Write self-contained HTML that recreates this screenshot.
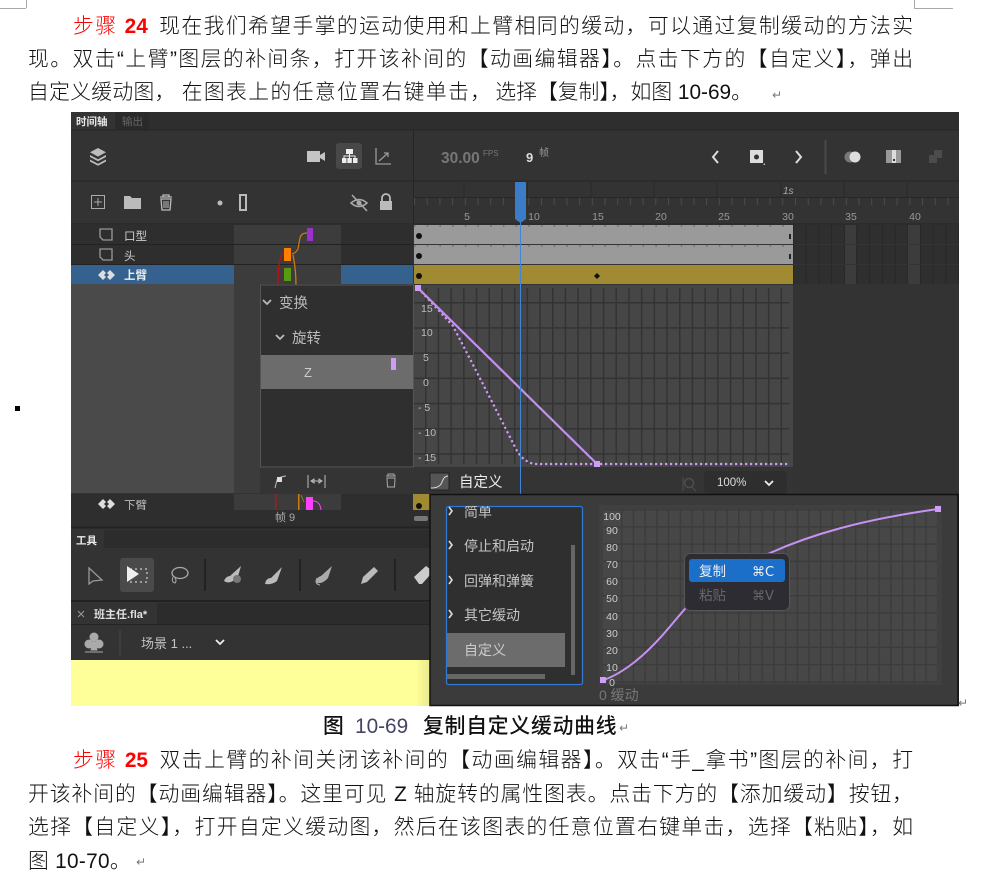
<!DOCTYPE html>
<html><head><meta charset="utf-8"><style>
html,body{margin:0;padding:0;background:#fff;width:983px;height:880px;overflow:hidden}
.l{position:absolute;font:300 20.8px/30px "Liberation Sans","Noto Sans CJK SC",sans-serif;color:#111;white-space:nowrap;text-align:justify;text-align-last:justify}
.n{text-align:left;text-align-last:left;letter-spacing:.3px}
.r{color:#f00;margin-right:10px}
.r b{font-weight:700}
.m{position:absolute;background:#aaa}
.p{position:absolute;font:12px "Liberation Sans","DejaVu Sans",sans-serif;color:#777}
svg{position:absolute;left:0;top:0}
svg text{font-family:"Liberation Sans","Noto Sans CJK SC",sans-serif}
</style></head><body>
<div class="m" style="left:0;top:8px;width:26px;height:1px"></div><div class="m" style="left:26px;top:0;width:1px;height:8px"></div>
<div class="m" style="left:914px;top:8px;width:39px;height:1px"></div><div class="m" style="left:914px;top:0;width:1px;height:8px"></div>
<div class="l" style="left:73px;top:12px;width:840px"><span class="r">步骤 <b>24</b></span>现在我们希望手掌的运动使用和上臂相同的缓动，可以通过复制缓动的方法实</div>
<div class="l" style="left:28px;top:45px;width:885px">现。双击“上臂”图层的补间条，打开该补间的【动画编辑器】。点击下方的【自定义】，弹出</div>
<div class="l n" style="left:28px;top:78px">自定义缓动图<span style="margin-right:6px">，</span><span style="letter-spacing:1.400px">在图表上的任意位置右键单击</span><span style="margin-right:4px">，</span><span style="letter-spacing:0">选择【复制】，如图 10-69。</span></div>
<div class="p" style="left:772px;top:88px">↵</div>
<div style="position:absolute;left:15px;top:406px;width:5px;height:5px;background:#000"></div>

<svg width="983" height="880" viewBox="0 0 983 880">
<defs>
<pattern id="g1" x="425" y="302" width="12.7" height="25.200" patternUnits="userSpaceOnUse"><rect width="12.7" height="25.200" fill="#464646"/><path d="M.75 0V25.200M0 .75H12.7" stroke="#333" stroke-width="1.500"/></pattern>
<pattern id="g1h" x="414" y="302" width="12.7" height="25.200" patternUnits="userSpaceOnUse"><rect width="12.7" height="25.200" fill="#464646"/><path d="M0 .75H12.7" stroke="#333" stroke-width="1.500"/></pattern>
<pattern id="g2" x="621" y="509" width="11.700" height="17.200" patternUnits="userSpaceOnUse"><rect width="11.700" height="17.200" fill="#474747"/><path d="M.75 0V17.200M0 .75H11.700" stroke="#3c3c3c" stroke-width="1.500"/></pattern>
<pattern id="g2h" x="603" y="509" width="11.700" height="17.200" patternUnits="userSpaceOnUse"><rect width="11.700" height="17.200" fill="#474747"/><path d="M0 .75H11.700" stroke="#3c3c3c" stroke-width="1.500"/></pattern>
<pattern id="c" x="793" y="225" width="12.7" height="20" patternUnits="userSpaceOnUse"><rect width="12.7" height="20" fill="#2f2f2f"/><path d="M.5 0V20" stroke="#272727"/></pattern>
<pattern id="t" x="414" y="198" width="12.7" height="7" patternUnits="userSpaceOnUse"><path d="M.5 0V7" stroke="#4c4c4c"/></pattern>
<linearGradient id="y" x1="0" x2="1" y1="0" y2="0"><stop offset="0" stop-color="#ffff99"/><stop offset=".96" stop-color="#ffff99"/><stop offset="1" stop-color="#e8e890"/></linearGradient>
<clipPath id="list"><rect x="447" y="506" width="134" height="178"/></clipPath>
<clipPath id="low"><rect x="71" y="494" width="359" height="212"/></clipPath>
</defs>
<!-- base -->
<rect x="71" y="112" width="888" height="594" fill="#333"/>
<rect x="71" y="112" width="888" height="18" fill="#2e2e2e"/>
<rect x="71" y="112" width="44" height="18" fill="#333"/>
<rect x="115" y="112" width="34" height="18" fill="#2a2a2a"/>
<text x="76" y="125" font-size="10.5" font-weight="700" fill="#e8e8e8">时间轴</text>
<text x="122" y="125" font-size="10.5" fill="#666">输出</text>
<path d="M71 130H959M71 181H959M71 224H959M413.500 130V224" stroke="#252525" fill="none"/>
<!-- header icons -->
<path d="M98 148l8 4.300-8 4.300-8-4.300zM90 155l8 4.300 8-4.300v2l-8 4.300-8-4.300zM90 159.500l8 4.300 8-4.300v2l-8 4.300-8-4.300z" fill="#bbb"/>
<path d="M307 151h13v11h-13zM320 155l5-3v9l-5-3z" fill="#c4c4c4"/>
<rect x="336" y="143" width="26" height="26" rx="3" fill="#484848"/>
<path d="M346 149h7v5h-7zM342 158h4.500v5h-4.500zM347.300 158h4.500v5h-4.500zM353 158h4.500v5h-4.500z" fill="#eee"/>
<path d="M349.500 154V158M344 158V156H355V158" stroke="#eee" fill="none"/>
<path d="M376 148v16h15M379 161l9-8M384 153h4v4" stroke="#999" stroke-width="1.300" fill="none"/>
<text x="441" y="163" font-size="15.5" font-weight="700" fill="#777">30.00</text>
<text x="483" y="156" font-size="8" fill="#777">FPS</text>
<text x="526" y="162" font-size="13" font-weight="700" fill="#ddd">9</text>
<text x="539" y="156" font-size="10" fill="#999">帧</text>
<path d="M718 151l-5 6 5 6M796 151l5 6-5 6" stroke="#ddd" stroke-width="2" fill="none"/>
<rect x="750" y="150" width="13" height="13" fill="#ddd"/><circle cx="756.500" cy="157" r="2.500" fill="#333"/>
<path d="M765 165h-2l2-2z" fill="#ccc"/>
<rect x="824.500" y="140" width="2" height="34" fill="#4a4a4a"/>
<circle cx="850" cy="157" r="5.500" fill="#777"/><circle cx="855" cy="157" r="5.500" fill="#ddd"/>
<rect x="886" y="150" width="15" height="13" fill="#999"/><rect x="892" y="150" width="4" height="13" fill="#ddd"/><rect x="893" y="159" width="2" height="2" fill="#333"/>
<path d="M929 155h8v8h-8zM934 150h8v8h-8z" fill="#4c4c4c"/>
<!-- second row -->
<rect x="91.500" y="195.500" width="13" height="13" fill="none" stroke="#aaa"/><path d="M98 198v8M94 202h8" stroke="#aaa"/>
<path d="M124 196h6l2 2h9v11h-17z" fill="#bbb"/>
<path d="M160 197h12M163 197v-2h6v2M161 199h10l-1 11h-8z" stroke="#bbb" stroke-width="1.300" fill="none"/><path d="M164 201v7M166 201v7M168 201v7" stroke="#bbb"/>
<circle cx="220" cy="203" r="2.500" fill="#bbb"/>
<rect x="240" y="195" width="6" height="15" fill="none" stroke="#bbb" stroke-width="2"/>
<path d="M351 203q8-7 16 0q-8 7-16 0zM352 195l15 16" stroke="#aaa" stroke-width="1.500" fill="none"/><circle cx="359" cy="203" r="2.500" fill="#aaa"/>
<rect x="380" y="201" width="12" height="9" fill="#bbb"/><path d="M382 201v-3a4 4 0 018 0v3" stroke="#bbb" stroke-width="1.800" fill="none"/>
<!-- ruler -->
<path d="M414 197.500H959" stroke="#272727"/>
<rect x="414" y="198" width="545" height="7" fill="url(#t)"/>
<path d="M464 182V197M527.500 182V197M591 182V197M654 182V197M717 182V197M781 182V197M844 182V197M907 182V197" stroke="#282828"/>
<g font-size="10.500" fill="#999" text-anchor="middle"><text x="467" y="220">5</text><text x="534" y="220">10</text><text x="598" y="220">15</text><text x="661" y="220">20</text><text x="724" y="220">25</text><text x="788" y="220">30</text><text x="851" y="220">35</text><text x="915" y="220">40</text></g>
<text x="783" y="194" font-size="10" font-style="italic" fill="#aaa">1s</text>
<!-- layers -->
<rect x="71" y="225" width="342" height="59" fill="#2e2e2e"/>
<rect x="234" y="225" width="107" height="59" fill="#3c3c3c"/>
<path d="M71 244.500H413M71 264.500H413" stroke="#222"/>
<rect x="71" y="265" width="163" height="19" fill="#35618f"/><rect x="341" y="265" width="72" height="19" fill="#35618f"/>
<g fill="none" stroke="#999" stroke-width="1.300"><path d="M100 229h12v11h-9l-3-3zM100 249h12v11h-9l-3-3z"/></g>
<text x="124" y="240" font-size="11.500" fill="#ccc">口型</text><text x="124" y="260" font-size="11.500" fill="#ccc">头</text><text x="124" y="279" font-size="11.500" font-weight="700" fill="#eee">上臂</text>
<path d="M98 275l5-5 3 3-2 2 2 2-3 3zM115 275l-5-5-3 3 2 2-2 2 3 3z" fill="#ddd"/>
<rect x="307" y="228" width="6" height="13" fill="#9932cc"/><rect x="284" y="248" width="7" height="13" fill="#ff8000"/><rect x="284" y="268" width="7" height="13" fill="#5a9a10"/>
<path d="M307 233q-6 0-7 5t-2 11q-2 4-6 5" stroke="#d07a10" stroke-width="1.200" fill="none"/>
<path d="M283 253q-5 5-5 32" stroke="#c01010" stroke-width="1.300" fill="none"/><path d="M293 255q3 15 3 30" stroke="#d07a10" stroke-width="1.300" fill="none"/>
<!-- lower-left gray -->
<rect x="71" y="284" width="163" height="209" fill="#4a4a4a"/>
<rect x="234" y="284" width="26" height="209" fill="#3c3c3c"/>
<!-- frames -->
<rect x="414" y="225" width="379" height="19" fill="#9a9a9a"/><rect x="414" y="245" width="379" height="19" fill="#9a9a9a"/><rect x="414" y="265" width="379" height="19" fill="#a08a32"/>
<path d="M414 226H793M414 246H793" stroke="#555" stroke-dasharray="1.500 11.200"/>
<circle cx="419" cy="236" r="3" fill="#111"/><circle cx="419" cy="256" r="3" fill="#111"/><circle cx="419" cy="276" r="3" fill="#111"/>
<rect x="789" y="234" width="2" height="5" fill="#222"/><rect x="789" y="254" width="2" height="5" fill="#222"/>
<path d="M597 273l3 3-3 3-3-3z" fill="#111"/>
<rect x="793" y="225" width="166" height="59" fill="url(#c)"/>
<rect x="845" y="225" width="11" height="59" fill="#3c3c3c"/><rect x="908" y="225" width="12" height="59" fill="#3c3c3c"/>
<path d="M793 244.500H959M793 264.500H959" stroke="#333"/>
<!-- property panel -->
<rect x="260.500" y="285" width="153" height="182" fill="#2f2f2f" stroke="#555"/>
<rect x="261" y="355" width="152" height="34" fill="#6c6c6c"/>
<path d="M263 300l4 4 4-4M276 335l4 4 4-4" stroke="#bbb" stroke-width="1.800" fill="none"/>
<text x="279" y="308" font-size="14.500" fill="#bbb">变换</text><text x="292" y="343" font-size="14.500" fill="#bbb">旋转</text>
<text x="304" y="377" font-size="13" fill="#ccc">Z</text>
<rect x="391" y="358" width="5" height="12" fill="#cf9cf7"/>
<!-- graph -->
<rect x="414" y="285" width="379" height="182" fill="#464646"/>
<rect x="414" y="288" width="11" height="176" fill="url(#g1h)"/>
<rect x="425" y="288" width="364" height="176" fill="url(#g1)"/>
<g font-size="10.500" fill="#bbb"><text x="421" y="312">15</text><text x="421" y="336">10</text><text x="423" y="361">5</text><text x="423" y="386">0</text><text x="418" y="411">- 5</text><text x="418" y="436">- 10</text><text x="418" y="461">- 15</text></g>
<path d="M418 288L453 326L487 392L515 447Q522 462 535 464H790" stroke="#cf9cf7" stroke-width="2.200" stroke-dasharray="2.200 2.800" fill="none"/>
<path d="M418 288L597 464" stroke="#c48ff0" stroke-width="2.200" fill="none"/>
<rect x="415" y="285" width="6" height="6" fill="#cf9cf7"/><rect x="594" y="461" width="6" height="6" fill="#cf9cf7"/>
<path d="M520.500 222V494" stroke="#3f86d8"/>
<path d="M515 182h11v37l-5.500 4-5.500-4z" fill="#3b7cc6"/>
<!-- bottom tools -->
<rect x="260" y="468" width="533" height="26" fill="#343434"/>
<path d="M520.500 468V494" stroke="#3f86d8"/>
<path d="M275 488l2-8q1-3 9-4" stroke="#bbb" fill="none"/><rect x="277" y="477" width="5" height="5" fill="#ddd"/>
<path d="M308 475V488M325 475V488M311 481h11M311 481l3-2v4zM322 481l-3-2v4z" stroke="#bbb" fill="none"/>
<path d="M386 476h10M388 476v-2h6v2M387 478h8l-.5 9h-7z" stroke="#aaa" fill="none"/>
<rect x="430" y="473" width="19" height="17" fill="#555" stroke="#222"/><path d="M431 488q9 0 11-6t6-6" stroke="#ddd" fill="none"/>
<text x="459" y="487" font-size="14.500" fill="#eee">自定义</text>
<circle cx="689" cy="483" r="4.500" stroke="#4e4e4e" fill="none" stroke-width="1.500"/><path d="M692 487l4 4M683 477v14" stroke="#4e4e4e"/>
<rect x="704" y="471" width="83" height="23" rx="4" fill="#2e2e2e"/>
<text x="717" y="486" font-size="11.500" fill="#ddd">100%</text>
<path d="M765 481l4 4 4-4" stroke="#eee" stroke-width="1.800" fill="none"/>
<!-- lower left -->
<rect x="71" y="494" width="359" height="212" fill="#333" />
<g clip-path="url(#low)">
<rect x="71" y="494" width="342" height="16" fill="#2e2e2e"/><rect x="234" y="494" width="107" height="16" fill="#3c3c3c"/>
<text x="124" y="509" font-size="11.500" fill="#bbb">下臂</text>
<path d="M98 504l5-5 3 3-2 2 2 2-3 3zM115 504l-5-5-3 3 2 2-2 2 3 3z" fill="#ddd"/>
<rect x="275" y="494" width="1.500" height="16" fill="#c01010"/><rect x="298" y="494" width="1.500" height="16" fill="#d07a10"/>
<rect x="306" y="497" width="7" height="13" fill="#ff40ff"/><path d="M313 501q7 0 8 9" stroke="#ff40ff" fill="none"/><path d="M301 495l3 7" stroke="#6a8a10"/>
<rect x="413" y="494" width="17" height="16" fill="#a08a32"/><circle cx="419" cy="506" r="3" fill="#111"/>
<rect x="71" y="510" width="359" height="17" fill="#2e2e2e"/>
<text x="275" y="521" font-size="11" fill="#aaa">帧 9</text>
<rect x="414" y="516" width="14" height="5" rx="2" fill="#777"/>
<path d="M71 527.500H430" stroke="#232323" stroke-width="2"/>
<rect x="71" y="530" width="359" height="18" fill="#2c2c2c"/><rect x="71" y="530" width="33" height="18" fill="#333"/>
<text x="76" y="544" font-size="10.500" font-weight="700" fill="#e8e8e8">工具</text>
<rect x="120" y="558" width="34" height="34" rx="3" fill="#4a4a4a"/>
<path d="M89 568l0 16 4-3 9-1z" fill="none" stroke="#999" stroke-width="1.300"/>
<path d="M127 566l0 16 12-8z" fill="#eee"/><rect x="130" y="569" width="17" height="13" fill="none" stroke="#eee" stroke-dasharray="2 3"/>
<ellipse cx="180" cy="573" rx="8" ry="5.500" fill="none" stroke="#aaa" stroke-width="1.300"/><path d="M173 577q-2 5 2 6 2-2 0-5" fill="none" stroke="#aaa"/>
<path d="M205 559v32M300 559v32M395 559v32" stroke="#222" stroke-width="2"/>
<path d="M224 581q2-5 6-5l11-10-4 14-4 1q-5 3-9 0z" fill="#bbb"/><circle cx="237" cy="579" r="4" fill="#777"/>
<path d="M265 584q1-6 6-6l11-11-5 14q-5 4-12 3z" fill="#bbb"/>
<path d="M317 583q-2-5 4-7l11-10-4 12q-5 6-11 5z" fill="#aaa"/><path d="M317 578q-3 6 3 7" stroke="#aaa" fill="none"/>
<path d="M361 584l2-7 11-10 4 4-11 11z" fill="#bbb"/>
<path d="M414 577l12-11 4 3v6l-8 9h-3z" fill="#ccc"/>
<path d="M71 601H430" stroke="#222" stroke-width="2"/>
<rect x="71" y="603" width="359" height="21" fill="#2c2c2c"/><rect x="71" y="603" width="86" height="21" fill="#333"/>
<path d="M78 611l6 6M84 611l-6 6" stroke="#999"/>
<text x="94" y="618" font-size="11" font-weight="700" fill="#e0e0e0">班主任.fla*</text>
<path d="M71 624.500H430" stroke="#232323"/>
<circle cx="94" cy="637" r="4.500" fill="#aaa"/><circle cx="89" cy="644" r="4.500" fill="#aaa"/><circle cx="99" cy="644" r="4.500" fill="#aaa"/><path d="M94 640l3 10h-6zM85 652h18" stroke="#aaa" fill="#aaa"/>
<path d="M120 630V655" stroke="#3e3e3e" stroke-width="2"/>
<text x="141" y="648" font-size="13" fill="#c4c4c4">场景 1 ...</text>
<path d="M216 640l4 4 4-4" stroke="#eee" stroke-width="1.800" fill="none"/>
<rect x="71" y="660" width="359" height="46" fill="url(#y)"/>
</g>
<!-- popup -->
<rect x="430" y="494.500" width="528" height="211" fill="#3b3b3b" stroke="#111" stroke-width="1.500"/>
<rect x="446.500" y="506.500" width="136" height="178" rx="2" fill="#2f2f2f" stroke="#2f79d3" stroke-width="1.300"/>
<g clip-path="url(#list)">
<rect x="447" y="633" width="118" height="34" fill="#6c6c6c"/>
<g font-size="14" fill="#c4c4c4"><text x="464" y="517">简单</text><text x="464" y="551">停止和启动</text><text x="464" y="586">回弹和弹簧</text><text x="464" y="620">其它缓动</text><text x="464" y="655" fill="#ccc">自定义</text></g>
<path d="M449 507l3 4-3 4M449 541l3 4-3 4M449 576l3 4-3 4M449 610l3 4-3 4" stroke="#ddd" stroke-width="1.600" fill="none"/>
<rect x="571" y="545" width="4" height="130" fill="#666"/><rect x="447" y="674" width="98" height="5" fill="#666"/>
</g>
<rect x="599" y="505" width="343" height="180" fill="#404040"/>
<rect x="603" y="509" width="18" height="174" fill="url(#g2h)"/>
<rect x="621" y="509" width="316" height="174" fill="url(#g2)"/>
<g font-size="10.500" fill="#ccc" text-anchor="middle"><text x="612" y="520">100</text><text x="612" y="534">90</text><text x="612" y="551">80</text><text x="612" y="568">70</text><text x="612" y="585">60</text><text x="612" y="602">50</text><text x="612" y="620">40</text><text x="612" y="637">30</text><text x="612" y="654">20</text><text x="612" y="671">10</text><text x="612" y="686">0</text></g>
<path d="M604 680C628 671 650 650 667 630S700 590 720 575 750 562 770 553C810 535 860 520 938 509" stroke="#c792f2" stroke-width="2" fill="none"/>
<rect x="600" y="677" width="6" height="6" fill="#cf9cf7"/><rect x="935" y="506" width="6" height="6" fill="#cf9cf7"/>
<rect x="684.500" y="553.500" width="105" height="57" rx="6" fill="#2d2c33" stroke="#555"/>
<rect x="689" y="559" width="96" height="23" rx="3" fill="#1b6fc9"/>
<text x="699" y="576" font-size="13.500" fill="#eee">复制</text><text x="752" y="576" font-size="13" fill="#eee" style="font-family:'DejaVu Sans',sans-serif">⌘C</text>
<text x="699" y="600" font-size="13.500" fill="#666">粘贴</text><text x="752" y="600" font-size="13" fill="#666" style="font-family:'DejaVu Sans',sans-serif">⌘V</text>
<text x="599" y="700" font-size="14" fill="#777">0 缓动</text>
</svg>

<div class="p" style="left:958px;top:696px">↵</div>
<div class="l" style="left:323px;top:712px;width:20px;font-weight:500">图</div>
<div class="l n" style="left:355px;top:712px;color:#446;letter-spacing:0">10-69</div>
<div class="l n" style="left:423px;top:712px;letter-spacing:.8px;font-weight:500">复制自定义缓动曲线</div>
<div class="p" style="left:619px;top:721px">↵</div>
<div class="l" style="left:73px;top:746px;width:840px"><span class="r">步骤 <b>25</b></span>双击上臂的补间关闭该补间的【动画编辑器】。双击“手_拿书”图层的补间，打</div>
<div class="l" style="left:28px;top:780px;width:885px">开该补间的【动画编辑器】。这里可见 Z 轴旋转的属性图表。点击下方的【添加缓动】按钮，</div>
<div class="l" style="left:28px;top:813px;width:885px">选择【自定义】，打开自定义缓动图，然后在该图表的任意位置右键单击，选择【粘贴】，如</div>
<div class="l n" style="left:28px;top:847px">图 10-70。</div>
<div class="p" style="left:136px;top:855px">↵</div>
</body></html>
